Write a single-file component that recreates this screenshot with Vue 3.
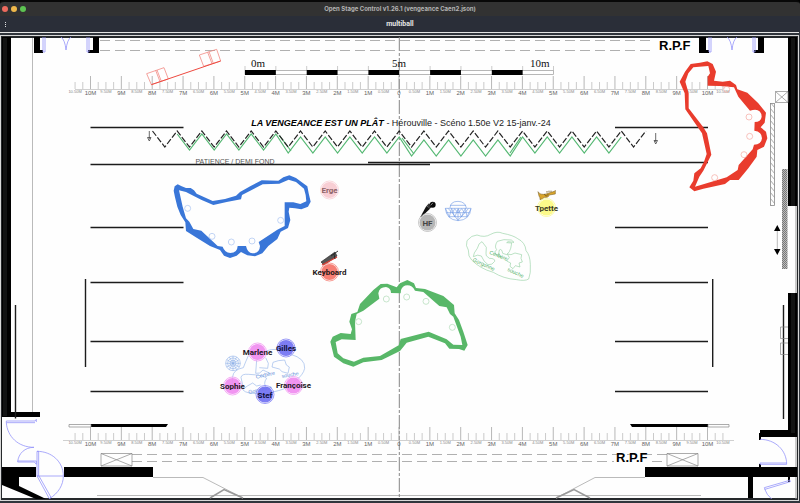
<script setup>
const centre = 399
const metre = 30.85

const ticks = []
for (let q = -42; q <= 42; q++) {
  ticks.push({ x: centre + (q * metre) / 4, major: q % 4 === 0 })
}

const labels = []
for (let h = -21; h <= 21; h++) {
  const value = Math.abs(h) / 2
  const whole = h % 2 === 0
  labels.push({
    x: centre + (h * metre) / 2,
    whole,
    text: h === 0 ? '0' : whole ? `${value}M` : `${value.toFixed(2)}M`
  })
}

const rulers = [
  { id: 'top', axis: 89, major: 76, minor: 82, text: 95 },
  { id: 'bottom', axis: 440, major: 427, minor: 433, text: 446 }
]

const scaleBlocks = [0, 2, 4, 6, 8].map((n) => 245 + n * metre)
const scaleMarks = Array.from({ length: 11 }, (_, n) => 245 + n * metre)

const step = 24.67
const zigzag = Array.from({ length: 41 }, (_, i) => `${152.5 + (i * step) / 2},${i % 2 ? 147 : 131}`).join(' ')
const greenZig = Array.from({ length: 37 }, (_, i) => {
  const x = 177.2 + (i * step) / 2
  const drop = i < 9 ? 0 : i < 19 ? 3 : i < 28 ? 6 : 3
  return `${x},${(i % 2 ? 150 : 134) + drop}`
}).join(' ')

const battens = [127, 227, 282, 341, 391]

const performers = [
  { name: 'Erge', x: 329.5, y: 190, color: '#f7c5cc', ink: '#8f6469' },
  { name: 'Keyboard', x: 329.5, y: 272, color: '#f4685c', ink: '#241616' },
  { name: 'HF', x: 427.5, y: 222.5, color: '#a9a9a9', ink: '#444' },
  { name: 'Tpette', x: 546.5, y: 207.5, color: '#fbf976', ink: '#3b3b24' },
  { name: 'Marlene', x: 257.5, y: 352, color: '#ee82ee', ink: '#241824' },
  { name: 'Gilles', x: 286, y: 348, color: '#6666f2', ink: '#10103a' },
  { name: 'Sophie', x: 232.5, y: 386, color: '#ee82ee', ink: '#241824' },
  { name: 'Françoise', x: 293.5, y: 384.5, color: '#ee82ee', ink: '#241824' },
  { name: 'Stef', x: 265, y: 394.5, color: '#6666f2', ink: '#10103a' }
]

const spokes = Array.from({ length: 12 }, (_, i) => {
  const a = (i * Math.PI) / 6
  return { x: 99 + 22 * Math.cos(a), y: 115 + 22 * Math.sin(a) }
})
</script>

<template>
  <div class="window">
    <header class="titlebar">
      <div class="lights">
        <button class="light close" aria-label="Close"></button>
        <button class="light minimise" aria-label="Minimise"></button>
        <button class="light zoom" aria-label="Zoom"></button>
      </div>
      <h1 class="title">Open Stage Control v1.26.1 (vengeance Caen2.json)</h1>
    </header>
    <nav class="toolbar">
      <button class="menu" aria-label="Menu"><i></i><i></i><i></i></button>
      <span class="tab">multiball</span>
    </nav>
    <main>
      <svg class="plan" viewBox="0 32 800 471">
        <defs>
          <pattern id="hatch" width="5" height="6" patternUnits="userSpaceOnUse">
            <path d="M0 0L5 6" stroke="#888" stroke-width=".7" />
          </pattern>
          <pattern id="mesh" width="2" height="2" patternUnits="userSpaceOnUse">
            <rect width="2" height="2" fill="#bbb" />
            <path d="M0 0h1v1H0zM1 1h1v1H1z" fill="#777" />
          </pattern>
        </defs>

        <!-- frame -->
        <rect y="32" width="800" height="471" fill="#30353c" />
        <rect y="32" width="799" height="1" fill="#e4e4e4" />
        <rect x="0" y="35" width="799" height="466" fill="#d8d8d8" />
        <rect x="1" y="36" width="797" height="464" fill="#26292c" />
        <rect x="2" y="38" width="795" height="460" fill="#fefefe" />
        <path d="M796 38V499" stroke="#999" />

        <!-- walls -->
        <g fill="#000">
          <path d="M2 37h9v375h29v5H2z" />
          <path d="M788 37h9v169h-9zM788 293h9v144h-37v-7h28z" />
          <path d="M2 467h34v10H19v9l27 13H36L2 485zM64 467h89v10H64z" />
          <path d="M645 467h152v10h-44v21h-5v-21H645z" />
          <path d="M34 37h6v13h3v3h-9zM93 37h6v16h-11v-3h5z" />
          <path d="M699 37h7v13h3v3h-10zM758 37h6v16h-10v-3h4z" />
          <path d="M91 424h77l-2 3H91zM630 424h78v3h-76z" />
          <path d="M759 433h2v7h-2zM759 464h2v3h-2zM788 477h2v5h-2z" />
        </g>
        <path d="M4 38V416M6 38V416" class="seam" />
        <path d="M792 38V206M792 293V433M794 38V206M794 293V433" class="seam" />
        <path d="M32.500 38V412M153 477.500H203L243 498M645 477.500H595L556 498M97 495.500H701" class="thin" />
        <path d="M210 498L224 489.500L243 498M556 498L574 489.500L590 498" class="tent" />

        <!-- dashed fly lines -->
        <path d="M100 40.500H655M100 50.500H655M132 454.500H667M132 461.500H614M652 461.500H667" class="fly" />
        <path d="M399.300 37V498" class="axis" />

        <!-- battens -->
        <g class="batten">
          <path v-for="y in battens" :key="y" :d="`M90.500 ${y + 0.5}H183.500M615 ${y + 0.5}H708`" />
          <path d="M90.500 164.500H430M368 162.500H708M85.500 279V367M712.700 279V367M15.500 305V418.500M783.500 305V419" />
        </g>
        <g class="box">
          <path d="M69 424.500H91V427H69zM708 424.500H729V427H708z" />
          <path d="M101 453.500H132V466H101zL132 466M132 453.500L101 466" />
          <path d="M667 453.500H698V466H667zL698 466M698 453.500L667 466" />
          <path d="M775.500 91.500H788V102.500H775.500zL788 102.500M788 91.500L775.500 102.500" />
          <path d="M788 327H780.500V338.500H788M788 343H780.500V354.500H788" />
        </g>
        <rect x="770.500" y="103.500" width="4" height="102" fill="url(#hatch)" stroke="#888" stroke-width=".8" />
        <rect x="782" y="169" width="5.500" height="100" fill="url(#mesh)" />
        <path d="M777.300 229V252" class="thin" />
        <path d="M777.300 225L780.500 231H774zM777.300 255L780.500 249H774z" />

        <!-- rulers -->
        <g v-for="r in rulers" :key="r.id">
          <path :d="`M${r.id === 'top' ? 75 : 63} ${r.axis + 0.5}H${r.id === 'top' ? 723 : 734}`" class="rule" />
          <path
            v-for="t in ticks"
            :key="t.x"
            :d="`M${t.x} ${t.major ? r.major : r.minor}V${r.axis}`"
            :class="t.major ? 'tick major' : 'tick'"
          />
          <text v-for="l in labels" :key="l.x" :x="l.x" :y="l.whole ? r.text : r.text - 2" :class="l.whole ? 'metre' : 'half'">{{ l.text }}</text>
        </g>

        <!-- scale bar -->
        <rect x="245" y="70.500" width="308.500" height="4" class="scale-frame" />
        <rect v-for="x in scaleBlocks" :key="x" :x="x" y="70" :width="metre" height="5" />
        <path v-for="x in scaleMarks" :key="x" :d="`M${x} 66V70`" class="tick" />
        <text x="251" y="67" class="scale">0m</text>
        <text x="392" y="67" class="scale">5m</text>
        <text x="530" y="67" class="scale">10m</text>

        <!-- titles -->
        <text x="401" y="126" class="show"><tspan class="name">LA VENGEANCE EST UN PLÂT</tspan> - Hérouville - Scéno 1.50e V2 15-janv.-24</text>
        <text x="235" y="164" class="note">PATIENCE / DEMI FOND</text>
        <text x="659" y="50" class="rpf">R.P.F</text>
        <text x="616" y="462" class="rpf">R.P.F</text>

        <!-- curtain -->
        <polyline :points="greenZig" class="green-edge" />
        <path d="M279 135L291 151M402 138L414 154M510 153L521 137" class="green-edge" />
        <polyline :points="zigzag" class="curtain" />
        <path d="M149.300 131V139M147.500 137.500h3.500L149.300 141zM655.700 133V142M654 140.500h3.500L655.700 144z" class="pull" />

        <!-- doors -->
        <g class="door">
          <path d="M43 37v15h2V37M87 37v15h2V37M61 37Q65 40 66 50Q67 40 71 37" />
          <path d="M709 37v15h2V37M753 37v15h2V37M727 37Q731 40 732 50Q733 40 737 37" />
        </g>
        <svg x="0" y="160" width="200" height="343" viewBox="0 0 600 1029">
          <g class="door large">
            <path d="M105 788H19V783H105L109 778V786M19 788C22 830 55 862 102 862C75 862 55 880 53 906H103L109 913V903H53" />
            <path d="M111 874H116V948H111zC155 874 190 905 190 948H111L148 1016L153 1012L117 948M190 948C190 975 175 1000 148 1016" />
          </g>
        </svg>
        <svg x="600" y="180" width="200" height="323" viewBox="0 0 600 969">
          <g class="door large">
            <path d="M480 778C525 778 560 810 560 853H480V849H560M569 899L571 905L495 928L493 923L569 901M494 927Q500 945 515 957" />
          </g>
        </svg>

        <!-- ramp -->
        <svg x="0" y="0" width="270" height="170" viewBox="0 0 810 510">
          <g class="ramp">
            <path d="M440 221L492 203L505 237L454 254zM467 211L480 245M471 210L484 244M598 165L650 148L662 183L611 199zM623 157L636 191M627 155L640 190" />
            <path d="M454 254L662 183" class="deck" />
          </g>
        </svg>

        <!-- sails -->
        <svg x="160" y="160" width="190" height="130" viewBox="0 0 570 390">
          <path
            class="sail" fill="#3976d8"
            d="M41 92L44 79L53 73L65 79L78 84L92 84L102 91L110 101L158 123L195 117L228 107L240 96L272 78L305 61L355 62L370 52L388 46L408 54L442 79L446 100L452 125L444 140L424 148L405 145L388 143L386 155L391 180L384 204L362 215L352 237L325 258L307 280L285 289L262 286L243 276L230 287L210 294L192 287L180 270L150 258L110 233L78 213L76 187L62 165L52 140L45 112Z
            M57 91L78 96L97 106L125 120L160 135L200 126L243 118L246 105L308 73L358 71L386 59L408 66L432 86L437 105L439 124L421 132L400 127L374 127L374 198L352 209L296 246L300 258Q299 280 277 280Q263 280 258 258L233 258Q232 279 211 279Q194 278 188 260L173 258L124 212L100 207L88 185L78 175L68 140Z"
          />
          <g fill="none" stroke="#a4bff0" stroke-width="2">
            <circle cx="83" cy="145" r="9" /><circle cx="156" cy="229" r="9" /><circle cx="214" cy="246" r="9" /><circle cx="276" cy="243" r="9" /><circle cx="362" cy="181" r="9" />
          </g>
        </svg>
        <svg x="310" y="170" width="270" height="210" viewBox="0 0 810 630">
          <path
            class="sail" fill="#58b768"
            d="M61 515L68 500L92 489L122 492L126 478L118 455L124 432L142 426L150 402L190 360L212 342L232 341L260 352L270 340L292 330L312 340L318 354L345 357L400 378L432 405L434 430L447 450L460 485L473 525L463 542L447 537L418 536L405 520L355 500L290 518L270 543L215 570L160 577L130 590L100 580L72 560Z
            M77 516L95 508L137 510L135 455L140 432L160 422L208 386L205 370Q208 351 228 351Q243 354 243 369L272 370L273 360Q278 346 292 346Q307 346 315 362L340 366L388 408L410 412L420 432L430 440L452 500L457 525L430 524L410 508L356 485L272 507L266 526L210 558L160 563L132 575L100 565L83 550Z"
          />
          <g fill="none" stroke="#acd9b3" stroke-width="2">
            <circle cx="229" cy="387" r="9" /><circle cx="290" cy="381" r="9" /><circle cx="348" cy="394" r="9" /><circle cx="427" cy="472" r="9" /><circle cx="146" cy="455" r="9" />
          </g>
        </svg>
        <svg x="660" y="50" width="140" height="150" viewBox="0 0 420 450">
          <path
            class="sail" fill="#e93c2d"
            d="M59 95L75 65L92 42L120 38L142 34L158 42L168 65L162 92L188 95L210 92L228 105L232 118L262 128L295 160L318 188L314 218L302 232L318 245L322 265L312 290L292 300L290 320L265 355L236 390L210 390L195 402L130 416L103 424L88 412L100 392L103 370L122 355L132 335L140 312L134 285L126 250L102 215L76 178L74 130Z
            M76 95L85 70L100 52L145 48L150 70L143 80L143 107L180 108L222 112L235 140L270 182Q303 172 305 200Q303 216 284 216L283 242Q306 245 306 265Q304 284 282 284L278 298L236 345L233 360L200 382L105 410L118 380L130 362L154 314L141 250L130 232L86 175L86 130Z"
          />
          <g fill="none" stroke="#f4a59d" stroke-width="2">
            <circle cx="200" cy="118" r="9" /><circle cx="267" cy="201" r="9" /><circle cx="269" cy="259" r="9" /><circle cx="252" cy="314" r="9" /><circle cx="164" cy="383" r="9" />
          </g>
        </svg>

        <!-- rocks and dome -->
        <svg x="410" y="180" width="160" height="105" viewBox="0 0 480 315">
          <g class="rock green">
            <path d="M171 182Q185 165 201 165Q224 174 242 163Q262 152 278 160Q310 166 323 176Q346 187 348 212Q360 225 361 253Q363 280 356 297Q345 304 320 299Q280 296 250 277Q210 266 185 240Q174 230 175 210Q166 198 171 182Z" />
            <path d="M216 185L229 202L228 220Q225 227 238 235Q256 235 254 244Q247 256 234 254Q221 246 214 228Q204 222 190 230Q190 220 202 205Q206 188 216 185Z" />
            <path d="M262 184Q280 176 304 180L312 187L294 185L290 188L305 189Q303 207 298 215L290 224L278 220Q275 204 268 210Q262 220 273 232L258 224Q250 215 260 209Q252 200 262 184Z" />
            <path d="M292 222L303 224L315 219L335 224L333 235L337 246L327 249L330 261L316 257L309 266L300 259L302 249L290 243L298 233Z" />
            <text x="187" y="243" transform="rotate(25 187 243)">Gorgonne</text>
            <text x="237" y="221" transform="rotate(22 237 221)">Cerbère</text>
            <text x="291" y="272" transform="rotate(25 291 272)">souche</text>
          </g>
          <g fill="none" stroke="#6f98e4" stroke-width="1.800">
            <path d="M106 85H183Q180 120 144 122Q109 119 106 85zM120 84Q121 64 144 64Q166 65 169 84M120 76H168" />
            <path d="M109 98H179M116 110H172M106 85L118 110L125 85L134 111L145 86L154 111L166 85L171 110L183 86M114 85L127 99L134 86L144 99L155 86L164 99L175 86M127 99L144 121L164 99M144 86V122" />
          </g>
          <g>
            <path d="M31 111L49 78L60 86L34 111z" fill="#111" />
            <path d="M50 77L57 70L66 81L58 87z" fill="#333" />
            <circle cx="68" cy="74" r="9" fill="#080808" />
            <path d="M62 76L69 68" stroke="#ccc" stroke-width="2" />
          </g>
          <g fill="#d9a52a" stroke="#70551a" stroke-width="1.500">
            <path d="M384 35Q390 46 408 42L433 34L436 31V42L418 45Q416 54 404 52Q396 58 390 59Q391 53 387 48Z" />
            <path d="M403 42Q408 54 415 42M411 38V33M417 37V32M423 36V32" fill="none" stroke-width="2.500" />
          </g>
        </svg>
        <g>
          <path d="M321 262L335 252L337 256L324 265z" fill="#555" stroke="#222" stroke-width=".6" />
          <path d="M322 265L337 257" stroke="#dc3c32" stroke-width="1.200" />
          <path d="M331 256L338 251M334 254L335 259" stroke="#222" stroke-width=".9" />
        </g>

        <svg x="200" y="325" width="130" height="90" viewBox="0 0 390 270">
          <g class="rock blue">
            <path d="M145 92Q136 112 130 128Q100 134 98 155L96 180M190 80Q240 62 272 88Q316 100 314 130Q310 150 285 168Q265 190 235 197Q190 210 148 204Q120 198 128 180L123 157Q125 146 146 148Q190 150 200 160Q188 175 200 190" />
            <path d="M170 105L167 145Q180 148 189 135L210 145M197 98L205 115L203 130L178 128M219 112L235 107L254 105L259 120L268 126L264 145L246 140L238 132L216 126zM128 187Q135 192 142 183L158 174L170 183L182 180" />
            <text x="169" y="161" transform="rotate(-12 169 161)">Cerbère</text>
            <text x="246" y="159" transform="rotate(-10 246 159)">souche</text>
            <text x="146" y="207" transform="rotate(-12 146 207)">Gorgonne</text>
            <circle cx="99" cy="115" r="22" /><circle cx="99" cy="115" r="16" /><circle cx="99" cy="115" r="9" />
            <path v-for="(s, i) in spokes" :key="i" :d="`M99 115L${s.x} ${s.y}`" />
          </g>
        </svg>

        <!-- performers -->
        <g v-for="p in performers" :key="p.name">
          <circle :cx="p.x" :cy="p.name === 'Françoise' ? p.y + 1 : p.y" r="9" :stroke="p.color" class="halo" />
          <circle :cx="p.x" :cy="p.name === 'Françoise' ? p.y + 1 : p.y" r="8" :fill="p.color" class="dot" />
          <text :x="p.x" :y="p.y + 3" :fill="p.ink" class="performer">{{ p.name }}</text>
        </g>
      </svg>
    </main>
  </div>
</template>

<style>
body {
  margin: 0;
  background: #30353c;
}
</style>

<style scoped>
.window {
  font-family: Inter, "Liberation Sans", sans-serif;
  background: #000;
}
.titlebar {
  display: grid;
  grid-template-columns: 1fr auto 1fr;
  align-items: center;
  height: 14px;
  border-top: 2px solid #080808;
  background: #323232;
  border-radius: 4px 4px 0 0;
}
.lights {
  display: flex;
  gap: 3px;
  padding-left: 2px;
}
.light {
  width: 6px;
  height: 6px;
  padding: 0;
  border: 0;
  border-radius: 50%;
}
.close { background: #ed6a5e; }
.minimise { background: #f0b94b; }
.zoom { background: #5dc452; }
.title {
  margin: 0;
  font-size: 6px;
  line-height: 8px;
  font-weight: 700;
  color: #b4b4b4;
}
.toolbar {
  display: grid;
  grid-template-columns: 1fr auto 1fr;
  align-items: center;
  height: 16px;
  background: #2a2e38;
}
.menu {
  display: flex;
  flex-direction: column;
  gap: 1px;
  width: 12px;
  padding: 0 5px;
  border: 0;
  background: none;
}
.menu i {
  width: 1px;
  height: 1px;
  background: #e0e0e0;
}
.tab {
  font-family: Roboto, sans-serif;
  font-size: 7px;
  line-height: 8px;
  font-weight: 700;
  color: #e6e6e6;
}
.plan {
  display: block;
  width: 100%;
  height: auto;
}
.seam { stroke: #3d3f42; stroke-width: .6; }
.thin { fill: none; stroke: #a8a8a8; stroke-width: .8; }
.tent { fill: none; stroke: #999; stroke-width: 1.5; }
.fly { stroke: #b0b0b0; stroke-dasharray: 10 5; fill: none; }
.axis { stroke: #858585; stroke-width: 1; stroke-dasharray: 14 2 3 2; }
.batten { stroke: #1c1c1c; stroke-width: 1.4; fill: none; }
.box { fill: none; stroke: #888; stroke-width: .7; }
.rule { stroke: #c4c4c4; stroke-width: .8; }
.tick { stroke: #b4b4b4; stroke-width: .7; }
.major { stroke: #999; }
.metre, .half {
  font-family: "Liberation Sans", sans-serif;
  text-anchor: middle;
  fill: #666;
  font-size: 6px;
}
.half { font-size: 4px; fill: #888; }
.scale-frame { fill: #fff; stroke: #999; stroke-width: .7; }
.scale { font: 11px "Liberation Serif", serif; fill: #111; }
.show { font: 9px "Liberation Sans", sans-serif; fill: #222; text-anchor: middle; }
.name { font-weight: 700; font-style: italic; fill: #000; }
.note { font: 7px "Liberation Sans", sans-serif; fill: #555; text-anchor: middle; }
.rpf { font: 700 13px "Liberation Sans", sans-serif; fill: #000; }
.green-edge { fill: none; stroke: #55b873; stroke-width: 1.2; }
.curtain { fill: none; stroke: #222; stroke-width: 1.2; stroke-dasharray: 6 2; }
.pull { fill: none; stroke: #444; stroke-width: .8; }
.door { fill: none; stroke: #9494fa; stroke-width: .8; }
.large { stroke-width: 2.4; }
.ramp { fill: none; stroke: #f08078; stroke-width: 2.2; }
.deck { stroke: #ee4a40; stroke-width: 3; }
.sail { fill-rule: evenodd; }
.rock { fill: none; stroke-width: 1.8; }
.rock text { font: 16px "Liberation Sans", sans-serif; stroke: none; }
.green { stroke: #8fce9d; }
.green text { fill: #4fae64; }
.blue { stroke: #8fb0e8; }
.blue text { fill: #5a8ad8; }
.halo { fill: #fff; fill-opacity: .4; stroke-width: 1; stroke-opacity: .65; }
.dot { fill-opacity: .85; }
.performer {
  font-family: Roboto, sans-serif;
  font-size: 8px;
  font-weight: 700;
  text-anchor: middle;
}
</style>
